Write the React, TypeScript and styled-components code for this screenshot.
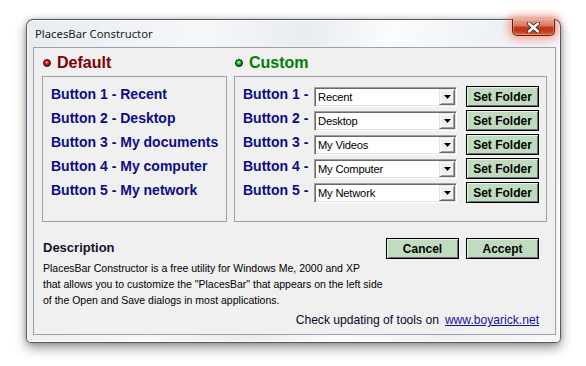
import React from "react";
import styled, { createGlobalStyle } from "styled-components";

const Global = createGlobalStyle`
  html, body { margin: 0; padding: 0; background: #ffffff; }
  body { font-family: "Liberation Sans", Arial, sans-serif; }
  * { box-sizing: border-box; }
`;

const Desktop = styled.div`
  width: 586px;
  height: 366px;
  padding: 19px 0 0 26px;
  display: flex;
  align-items: flex-start;
`;

const Window = styled.div`
  width: 535px;
  height: 324px;
  border: 1px solid rgba(45, 52, 60, 0.8);
  border-radius: 7px 7px 5px 5px;
  background: linear-gradient(100deg, #e8ecf0 0%, #f6f7f9 30%, #e9ecf0 48%, #fafbfc 62%, #eef1f4 80%, #f6f7f9 100%);
  box-shadow: 0 5px 12px rgba(0, 0, 0, 0.4), 0 0 5px rgba(0, 0, 0, 0.2), inset 0 0 0 1px rgba(255, 255, 255, 0.85);
  display: flex;
  flex-direction: column;
  padding: 0 4px 7px 6px;
`;

const TitleBar = styled.div`
  height: 27px;
  display: flex;
  justify-content: space-between;
  align-items: flex-start;
`;

const Title = styled.div`
  font-family: "Noto Sans", "Open Sans", sans-serif;
  font-size: 11.3px;
  color: #1c1c1c;
  padding: 6px 0 0 2px;
  line-height: 16px;
`;

const CloseButton = styled.div`
  width: 43px;
  height: 17px;
  margin: -1px 1px 0 0;
  border: 1px solid #5a1f12;
  border-top: none;
  border-radius: 0 0 5px 5px;
  background: linear-gradient(180deg, #e7a794 0%, #d7785e 42%, #c2381a 52%, #c0361a 74%, #dc6838 100%);
  box-shadow: 0 0 8px 3px rgba(255, 70, 40, 0.5), inset 0 0 0 1px rgba(255, 200, 180, 0.4);
  display: flex;
  align-items: center;
  justify-content: center;
`;

const Client = styled.div`
  flex: 1;
  background: #f0f0f0;
  border: 1px solid #98a2ad;
  padding: 0 8px 0 8px;
  display: flex;
  flex-direction: column;
`;

const Columns = styled.div`
  display: flex;
  gap: 7px;
`;

const Column = styled.div<{ $width: number }>`
  width: ${(p) => p.$width}px;
  flex: none;
  display: flex;
  flex-direction: column;
`;

const Heading = styled.div<{ $color: string }>`
  display: flex;
  align-items: center;
  gap: 6px;
  height: 18px;
  margin: 6px 0 4px 1px;
  font-size: 16px;
  font-weight: bold;
  line-height: 18px;
  color: ${(p) => p.$color};
`;

const Dot = styled.span<{ $light: string; $mid: string; $dark: string }>`
  width: 8px;
  height: 8px;
  border-radius: 50%;
  border: 1px solid #111;
  background: radial-gradient(circle at 45% 40%, ${(p) => p.$light} 0, ${(p) => p.$mid} 1.6px, ${(p) => p.$dark} 3.5px);
  flex: none;
`;

const GroupBox = styled.div`
  height: 146px;
  border: 1px solid #a0a0a0;
  padding: 5px 0 0 8px;
  display: flex;
  flex-direction: column;
`;

const DefaultRow = styled.div`
  font-size: 14px;
  font-weight: bold;
  line-height: 24px;
  color: #0c0c84;
  white-space: nowrap;
`;

const CustomRow = styled.div`
  height: 24px;
  display: flex;
  align-items: flex-start;
`;

const RowLabel = styled.div`
  width: 71px;
  flex: none;
  font-size: 14px;
  font-weight: bold;
  line-height: 24px;
  color: #0c0c84;
  white-space: nowrap;
`;

const Combo = styled.div`
  width: 143px;
  flex: none;
  margin: 5px 9px 0 0;
  height: 20px;
  background: #fff;
  border: 1px solid;
  border-color: #a0a0a0 #ffffff #ffffff #a0a0a0;
  box-shadow: inset 1px 1px 0 #696969, inset -1px -1px 0 #e3e3e3;
  display: flex;
  align-items: center;
  justify-content: space-between;
  padding: 1px 1px 1px 3px;
`;

const ComboText = styled.span`
  font-size: 11.2px;
  letter-spacing: -0.2px;
  color: #000;
  line-height: 16px;
`;

const ComboArrow = styled.span`
  width: 16px;
  height: 16px;
  background: #f0f0f0;
  border: 1px solid;
  border-color: #e3e3e3 #696969 #696969 #e3e3e3;
  box-shadow: inset 1px 1px 0 #ffffff, inset -1px -1px 0 #a0a0a0;
  display: flex;
  align-items: center;
  justify-content: center;
`;

const GreenButton = styled.div<{ $top?: number }>`
  margin-top: ${(p) => p.$top ?? 0}px;
  width: 73px;
  height: 21px;
  flex: none;
  background: #c0dcc0;
  border: 1px solid #000;
  box-shadow: inset 1px 1px 0 #e4f1e4, inset -1px -1px 0 #6d6d6d;
  display: flex;
  align-items: center;
  justify-content: center;
  font-size: 12px;
  font-weight: bold;
  color: #000;
`;

const Bottom = styled.div`
  padding: 0 8px 0 1px;
  display: flex;
  flex-direction: column;
`;

const BottomTop = styled.div`
  margin-top: 16px;
  display: flex;
  justify-content: space-between;
  align-items: flex-start;
`;

const DescHeading = styled.div`
  margin-top: 2px;
  font-size: 13px;
  font-weight: bold;
  line-height: 16px;
  color: #14142a;
`;

const ButtonPair = styled.div`
  display: flex;
  gap: 7px;
`;

const Paragraph = styled.div`
  margin-top: 1px;
  font-size: 10.5px;
  line-height: 16px;
  color: #000;
  white-space: nowrap;
`;

const UpdateLine = styled.div`
  margin-top: 4px;
  display: flex;
  justify-content: flex-end;
  gap: 6px;
  font-size: 12.1px;
  line-height: 16px;
  color: #06062a;
`;

const Link = styled.a`
  color: #14149a;
  text-decoration: underline;
`;

const CloseIcon = () => (
  <svg width="13" height="11" viewBox="0 0 13 11">
    <path d="M2 1.5 L11 9.5 M11 1.5 L2 9.5" stroke="#4a2418" strokeWidth="4.2" strokeLinecap="round" />
    <path d="M2 1.5 L11 9.5 M11 1.5 L2 9.5" stroke="#ffffff" strokeWidth="2.4" strokeLinecap="round" />
  </svg>
);

const ArrowIcon = () => (
  <svg width="7" height="4" viewBox="0 0 7 4">
    <path d="M0 0 H7 L3.5 4 Z" fill="#000" />
  </svg>
);

const defaults = ["Recent", "Desktop", "My documents", "My computer", "My network"];
const customs = ["Recent", "Desktop", "My Videos", "My Computer", "My Network"];

export default function App() {
  return (
    <>
      <Global />
      <Desktop>
        <Window>
          <TitleBar>
            <Title>PlacesBar Constructor</Title>
            <CloseButton>
              <CloseIcon />
            </CloseButton>
          </TitleBar>
          <Client>
            <Columns>
              <Column $width={185}>
                <Heading $color="#800000">
                  <Dot $light="#ffc0c0" $mid="#ff1010" $dark="#a00000" />
                  Default
                </Heading>
                <GroupBox>
                  {defaults.map((d, i) => (
                    <DefaultRow key={d}>
                      Button {i + 1} - {d}
                    </DefaultRow>
                  ))}
                </GroupBox>
              </Column>
              <Column $width={313}>
                <Heading $color="#008000">
                  <Dot $light="#d0ffd0" $mid="#20d020" $dark="#007000" />
                  Custom
                </Heading>
                <GroupBox>
                  {customs.map((c, i) => (
                    <CustomRow key={c}>
                      <RowLabel>Button {i + 1} -</RowLabel>
                      <Combo>
                        <ComboText>{c}</ComboText>
                        <ComboArrow>
                          <ArrowIcon />
                        </ComboArrow>
                      </Combo>
                      <GreenButton $top={4}>Set Folder</GreenButton>
                    </CustomRow>
                  ))}
                </GroupBox>
              </Column>
            </Columns>
            <Bottom>
              <BottomTop>
                <DescHeading>Description</DescHeading>
                <ButtonPair>
                  <GreenButton>Cancel</GreenButton>
                  <GreenButton>Accept</GreenButton>
                </ButtonPair>
              </BottomTop>
              <Paragraph>
                PlacesBar Constructor is a free utility for Windows Me, 2000 and XP
                <br />
                that allows you to customize the "PlacesBar" that appears on the left side
                <br />
                of the Open and Save dialogs in most applications.
              </Paragraph>
              <UpdateLine>
                <span>Check updating of tools on</span>
                <Link href="#">www.boyarick.net</Link>
              </UpdateLine>
            </Bottom>
          </Client>
        </Window>
      </Desktop>
    </>
  );
}
